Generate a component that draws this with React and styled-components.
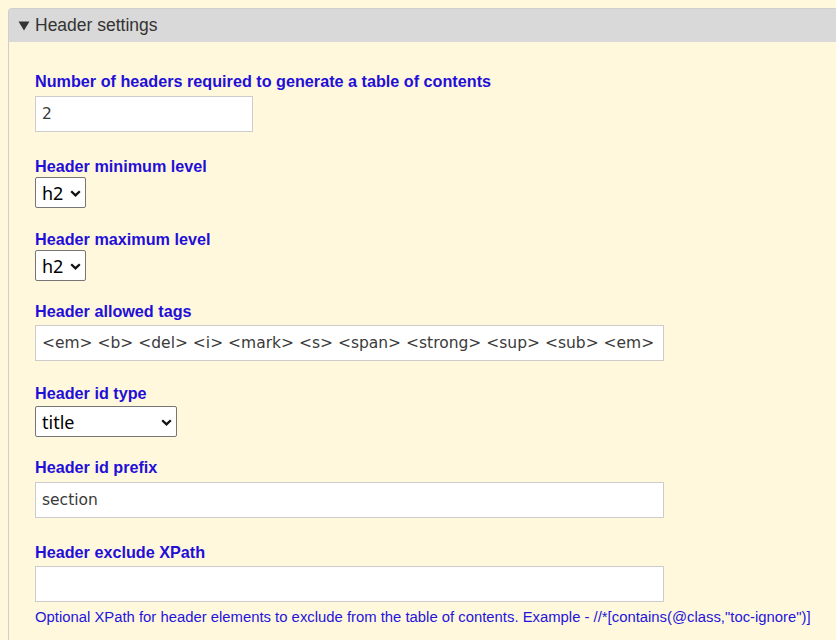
import React from "react";
import styled, { createGlobalStyle } from "styled-components";

const Global = createGlobalStyle`
  html { background: #fff8dc; }
  body { margin: 8px 0 0 8px; background: #fff8dc; font-family: "Liberation Sans", Arial, sans-serif; overflow: hidden; }
`;

const Panel = styled.div`
  box-sizing: border-box;
  border: 1px solid #cfcfcf;
  border-right: none;
  border-bottom: none;
  border-radius: 4px 0 0 0;
  background: #fff8dc;
  height: 632px;
  overflow: hidden;
`;

const Details = styled.details`
  display: block;
`;

const Summary = styled.summary`
  list-style: none;
  display: flex;
  align-items: center;
  gap: 5px;
  height: 33px;
  padding: 0 9px;
  background: #d9d9d9;
  color: #333;
  font-size: 17.5px;
  cursor: pointer;
  &::-webkit-details-marker { display: none; }
`;

const Body = styled.div`
  padding: 29px 26px 0;
  display: flex;
  flex-direction: column;
`;

const Field = styled.div`
  display: flex;
  flex-direction: column;
  align-items: flex-start;
  gap: ${(p) => p.$gap}px;
  margin-bottom: ${(p) => p.$after}px;
`;

const Label = styled.label`
  font-weight: bold;
  font-size: 16.2px;
  line-height: 20px;
  color: #1f0fd8;
`;

const TextInput = styled.input`
  box-sizing: border-box;
  width: ${(p) => p.$w}px;
  height: 36px;
  margin: 0;
  padding: 0 6px;
  border: 1px solid #cccccc;
  border-radius: 0;
  background: #fff;
  color: #3a3a3a;
  font-family: "DejaVu Sans", Verdana, sans-serif;
  font-size: 15.5px;
  outline: none;
`;

const SelectWrap = styled.span`
  position: relative;
  display: inline-block;
`;

const Select = styled.select`
  appearance: none;
  -webkit-appearance: none;
  box-sizing: border-box;
  display: block;
  height: 31px;
  width: ${(p) => p.$w}px;
  margin: 0;
  padding: 0 20px 0 6px;
  border: 1px solid #767676;
  border-radius: 2px;
  background: #fff;
  color: #000;
  font-family: "Noto Sans", "Open Sans", sans-serif;
  font-size: 18px;
`;

const Chevron = styled.svg`
  position: absolute;
  right: 5px;
  top: 50%;
  margin-top: -3px;
  width: 11px;
  height: 7px;
  pointer-events: none;
`;

const Help = styled.div`
  margin-top: 7px;
  font-size: 14.85px;
  line-height: 16px;
  color: #2414dc;
  white-space: nowrap;
`;

const Triangle = () => (
  <svg width="12" height="10" viewBox="0 0 12 10" aria-hidden="true">
    <path d="M0.5 0.5 L11.5 0.5 L6 9.5 Z" fill="#333" />
  </svg>
);

const Dropdown = ({ w, value, options }) => (
  <SelectWrap>
    <Select $w={w} defaultValue={value}>
      {options.map((o) => (
        <option key={o} value={o}>
          {o}
        </option>
      ))}
    </Select>
    <Chevron viewBox="0 0 11 7" aria-hidden="true">
      <path d="M1.2 1.2 L5.5 5.4 L9.8 1.2" fill="none" stroke="#111" strokeWidth="2.3" />
    </Chevron>
  </SelectWrap>
);

const levels = ["h1", "h2", "h3", "h4", "h5", "h6"];

export default function App() {
  return (
    <>
      <Global />
      <Panel>
        <Details open>
          <Summary>
            <Triangle />
            <span>Header settings</span>
          </Summary>
          <Body>
            <Field $gap={5} $after={24}>
              <Label>Number of headers required to generate a table of contents</Label>
              <TextInput $w={218} defaultValue="2" />
            </Field>
            <Field $gap={1} $after={21}>
              <Label>Header minimum level</Label>
              <Dropdown w={51} value="h2" options={levels} />
            </Field>
            <Field $gap={1} $after={20}>
              <Label>Header maximum level</Label>
              <Dropdown w={51} value="h2" options={levels} />
            </Field>
            <Field $gap={4} $after={22}>
              <Label>Header allowed tags</Label>
              <TextInput
                $w={629}
                defaultValue="<em> <b> <del> <i> <mark> <s> <span> <strong> <sup> <sub> <em>"
              />
            </Field>
            <Field $gap={3} $after={20}>
              <Label>Header id type</Label>
              <Dropdown w={142} value="title" options={["title", "sequential"]} />
            </Field>
            <Field $gap={5} $after={24}>
              <Label>Header id prefix</Label>
              <TextInput $w={629} defaultValue="section" />
            </Field>
            <Field $gap={4} $after={0}>
              <Label>Header exclude XPath</Label>
              <TextInput $w={629} defaultValue="" />
            </Field>
            <Help>
              Optional XPath for header elements to exclude from the table of contents. Example - //*[contains(@class,"toc-ignore")]
            </Help>
          </Body>
        </Details>
      </Panel>
    </>
  );
}
